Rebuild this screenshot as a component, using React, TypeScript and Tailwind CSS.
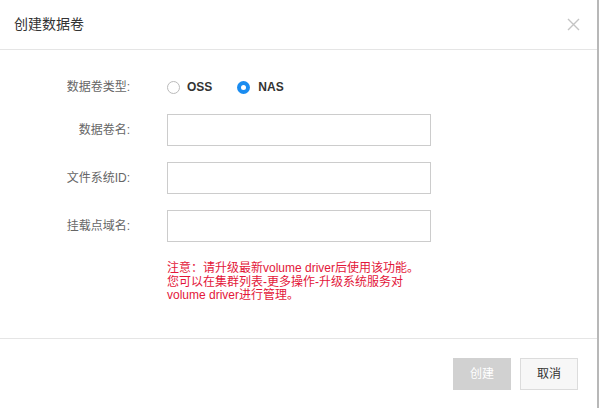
import React from "react";

const font = { fontFamily: '"Liberation Sans", "Noto Sans CJK SC", sans-serif' };

function Row({ label, children }: { label: string; children: React.ReactNode }) {
  return (
    <div className="flex items-center">
      <div className="w-[130px] text-right text-[12px] text-[#666]">{label}</div>
      <div className="ml-[37px]">{children}</div>
    </div>
  );
}

export default function App() {
  return (
    <div className="relative w-[599px] h-[408px] bg-white overflow-hidden" style={font}>
      <div className="absolute right-0 top-0 w-[2px] h-full bg-[#b8b8b8]" />
      <div className="w-[597px] h-full flex flex-col">
        <div className="h-[50px] flex items-center justify-between pl-[14px] pr-[17px] border-b border-[#e5e5e5]">
          <span className="text-[14px] text-[#333]">创建数据卷</span>
          <svg width="13" height="13" viewBox="0 0 13 13" stroke="#c4c4c4" strokeWidth="1.4">
            <path d="M1 1 L12 12 M12 1 L1 12" />
          </svg>
        </div>
        <div className="flex-1 flex flex-col pt-[27px]">
          <Row label="数据卷类型:">
            <div className="flex items-center h-[20px] text-[12px] font-bold text-[#333]">
              <span className="w-[13px] h-[13px] rounded-full border border-[#bbb] bg-white" />
              <span className="ml-[7px]">OSS</span>
              <span className="ml-[25px] w-[13px] h-[13px] rounded-full bg-[#1a8cf0] flex items-center justify-center">
                <span className="w-[5px] h-[5px] rounded-full bg-white" />
              </span>
              <span className="ml-[8px]">NAS</span>
            </div>
          </Row>
          <div className="mt-[17px] flex flex-col gap-[16px]">
            <Row label="数据卷名:">
              <div className="w-[264px] h-[32px] border border-[#ccc] bg-white" />
            </Row>
            <Row label="文件系统ID:">
              <div className="w-[264px] h-[32px] border border-[#ccc] bg-white" />
            </Row>
            <Row label="挂载点域名:">
              <div className="w-[264px] h-[32px] border border-[#ccc] bg-white" />
            </Row>
          </div>
          <div className="mt-[20px] ml-[167px] text-[12px] leading-[13.5px] text-[#e3173a]">
            <div>注意：请升级最新volume driver后使用该功能。</div>
            <div>您可以在集群列表-更多操作-升级系统服务对</div>
            <div>volume driver进行管理。</div>
          </div>
        </div>
        <div className="h-[70px] border-t border-[#e5e5e5] flex items-start justify-end pt-[19px] pr-[19px] gap-[9px]">
          <button className="w-[58px] h-[32px] bg-[#d1d1d1] text-white text-[12px]">创建</button>
          <button className="w-[58px] h-[32px] bg-[#f7f7f7] border border-[#dcdcdc] text-[#333] text-[12px]">取消</button>
        </div>
      </div>
    </div>
  );
}
